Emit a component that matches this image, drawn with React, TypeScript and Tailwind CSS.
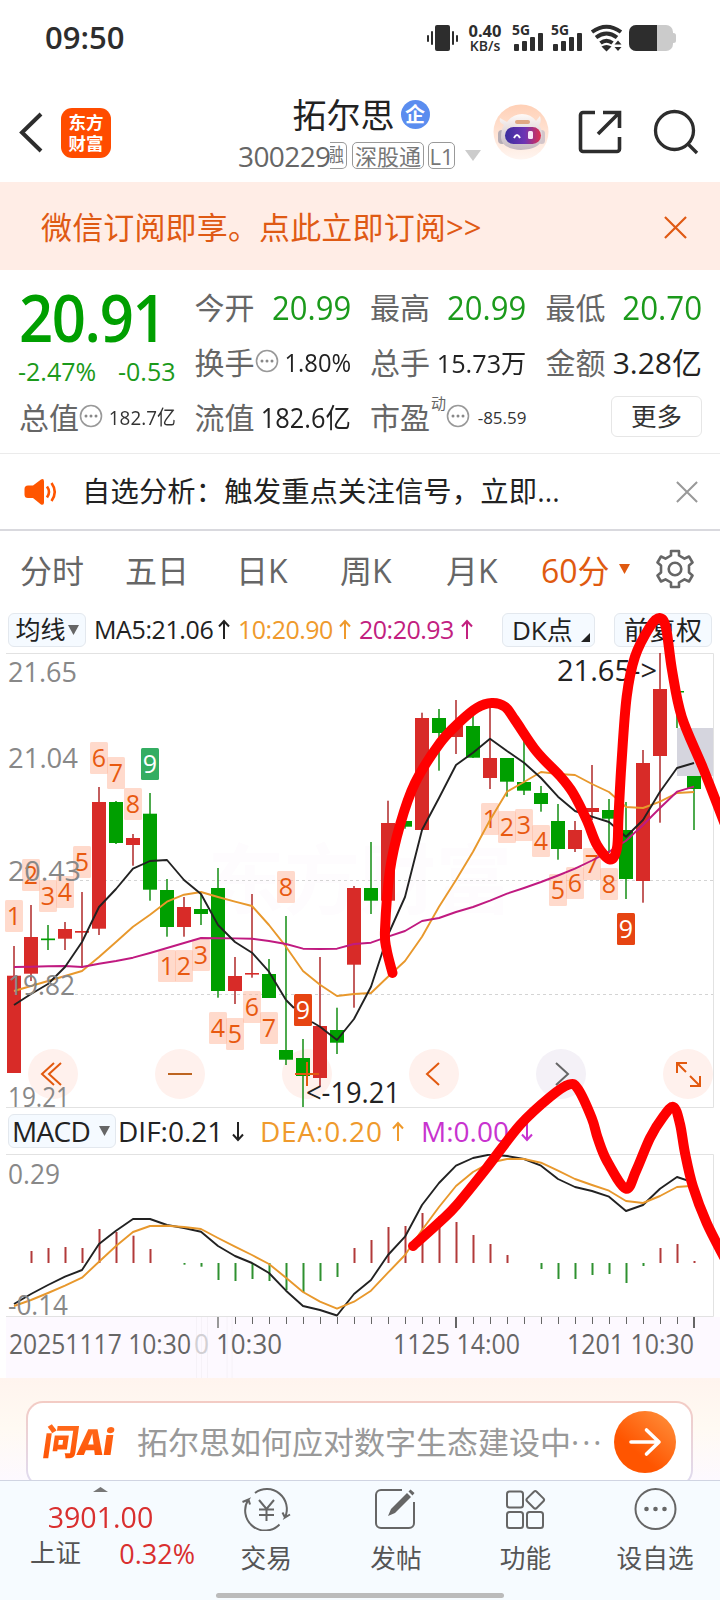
import type { ReactNode } from "react";
import clsx from "clsx";

const RED = "#d82b28";
const GREEN = "#009f00";
const STEP = 17;
const cx = (i: number) => 14 + STEP * i;

// [up, high, open/close top, open/close bottom, low]
const CANDLES: [boolean, number, number, number, number][] = [
  [true, 946, 975.7, 1073, 1073],
  [true, 905, 937, 973.7, 981],
  [false, 925, 938.5, 940.2, 950],
  [true, 922, 929, 938.7, 950],
  [true, 892, 931, 932.7, 968],
  [true, 787, 802, 928.7, 935],
  [false, 801, 802, 843, 844],
  [true, 834, 838, 845, 865.7],
  [false, 793, 813.7, 889.7, 900.7],
  [false, 879, 890, 927, 936.7],
  [true, 897, 907, 927, 936.7],
  [false, 894, 909, 914, 925],
  [false, 868, 888, 991, 997.7],
  [true, 957, 976, 991, 1004],
  [true, 894, 973, 974.6, 977.7],
  [false, 959, 974, 998, 998],
  [false, 916, 1050, 1059.7, 1065],
  [false, 1039, 1058, 1076, 1107],
  [true, 957, 1026, 1078, 1087],
  [false, 1007.7, 1030, 1042.7, 1054],
  [true, 886, 888, 964.7, 1007.7],
  [false, 842, 888, 900.7, 914],
  [true, 800.7, 823, 900.7, 901],
  [false, 818, 821, 826.7, 828.7],
  [true, 712.7, 718, 830, 830],
  [false, 709, 718, 733, 770.7],
  [true, 700, 726, 737, 754],
  [false, 716, 726, 757.7, 758],
  [true, 706, 758, 778, 789],
  [false, 758, 758, 781.7, 796.7],
  [false, 740, 782, 790.7, 795],
  [false, 786, 793, 804, 811.7],
  [false, 804, 821, 849, 859.7],
  [true, 821, 830, 849, 852],
  [true, 765, 808, 812, 820],
  [false, 799, 810, 818.7, 853],
  [false, 802, 830, 879, 899],
  [true, 750, 763, 881, 902.7],
  [true, 653, 689, 756, 822.7],
  [false, 691, 691, 692.5, 728],
  [false, 776, 776, 789, 830],
];

const MA5 = [
  1005, 994, 984, 967, 942, 907, 889, 868.7, 861, 860, 880, 894, 925, 942, 952.7, 971.7, 1000, 1017, 1026.7, 1040,
  1019, 986.7, 935, 897, 830, 798, 765, 752.7, 738.7, 751, 762.7, 778, 796.7, 811, 816.7, 822, 836.7, 820, 791.7,
  768, 763,
];
const MA10 = [
  991, 986, 981, 976, 971, 957, 942, 926.7, 914.7, 901.7, 894.7, 892, 897, 901.7, 906, 925, 946.7, 971, 984.7, 996,
  994, 993, 976.7, 961, 936.7, 906.7, 880, 851.7, 820, 791.7, 782, 772, 774, 775, 784, 792, 807, 808, 801.7, 793, 792,
];
const MA20 = [
  967, 966.7, 966.3, 966, 967, 963.7, 961, 957.7, 953, 948, 943, 938, 938.2, 938.4, 938.7, 941, 944, 948.7, 949,
  948.7, 944, 942.7, 936.7, 931, 921, 918, 912, 907, 900.7, 893.7, 888, 882, 875.5, 868.7, 860.5, 851.7, 840.7, 825,
  808, 791.7, 786.7,
];

const BAR_ENDS: (number | null)[] = [
  null, 1251, 1248, 1247, 1248, 1229, 1232, 1235.7, 1249, null, 1264.7, 1266.7, 1280, 1281, 1279, 1281, 1290, 1292,
  1281, 1277, 1248, 1240, 1227, 1226, 1213, 1216, 1222, 1235, 1244, 1255, null, 1269, 1279, 1279, 1275, 1274, 1283,
  1266, 1248, 1244, 1261,
];
const DIF = [
  1304, 1294, 1285, 1276.7, 1270, 1244, 1230.7, 1219, 1219, 1225, 1228, 1231.7, 1246, 1256, 1263, 1273, 1290.7, 1306,
  1310, 1315.5, 1294, 1280, 1255, 1236.7, 1205, 1183, 1165.7, 1158, 1154.5, 1156, 1159, 1165.7, 1179, 1187, 1191,
  1196.7, 1211, 1205, 1188.7, 1177, 1182.7,
];
const DEA = [
  1306, 1300, 1293, 1285.7, 1277.7, 1261.7, 1246, 1232, 1226, 1225.7, 1227, 1229, 1238, 1246.7, 1255, 1264, 1277.7,
  1292, 1301.7, 1308.7, 1301.7, 1290.7, 1272.7, 1255, 1230, 1207, 1186, 1172, 1162.7, 1159, 1159, 1162.7, 1170.7,
  1179, 1185, 1190.7, 1201, 1203, 1196, 1187, 1185.7,
];

// [candle index, label, top]
const COUNTS: [number, number, number][] = [
  [0, 1, 900], [1, 2, 859], [2, 3, 880], [3, 4, 876], [4, 5, 846], [5, 6, 742], [6, 7, 757], [7, 8, 788], [8, 9, 748],
  [9, 1, 950], [10, 2, 950], [11, 3, 939], [12, 4, 1012], [13, 5, 1018], [14, 6, 991], [15, 7, 1012], [16, 8, 871],
  [17, 9, 994],
  [28, 1, 803], [29, 2, 811], [30, 3, 809], [31, 4, 825], [32, 5, 874], [33, 6, 867], [34, 7, 848], [35, 8, 868],
  [36, 9, 913],
];

const STROKE_A: [number, number][] = [
  [392.5, 973], [386.7, 950], [385, 930], [390, 870], [400, 825], [415, 783], [440, 743], [460, 721.7], [476.7, 708],
  [491.7, 703], [505, 706.7], [515, 720], [536.7, 751.7], [560, 776], [573, 793], [586.7, 820], [597, 845], [610, 859.5],
  [617, 848], [618.5, 816.7], [621.5, 763], [626.7, 696.7], [635, 656.7], [650, 626.7], [659.5, 618], [666, 628],
  [672, 670], [681.7, 716.7], [703, 768], [724, 822],
];
const STROKE_B: [number, number][] = [
  [413, 1246], [440, 1221.7], [456.7, 1205], [486.7, 1168], [520, 1125], [550, 1097], [569, 1084.5], [578, 1089],
  [591.7, 1118], [597.7, 1138], [607, 1161], [625.7, 1188.5], [636, 1171], [650, 1138], [663, 1117], [673.5, 1107],
  [680, 1124], [685, 1153], [693, 1186.7], [706.7, 1223], [724, 1257],
];

const line = (ys: number[]) => ys.map((y, i) => `${cx(i)},${y}`).join(" ");

function smooth(p: [number, number][]) {
  let d = `M${p[0][0]} ${p[0][1]}`;
  for (let i = 0; i < p.length - 1; i++) {
    const a = p[i - 1] ?? p[i];
    const b = p[i];
    const c = p[i + 1];
    const e = p[i + 2] ?? c;
    d += ` C${b[0] + (c[0] - a[0]) / 6} ${b[1] + (c[1] - a[1]) / 6} ${c[0] - (e[0] - b[0]) / 6} ${c[1] - (e[1] - b[1]) / 6} ${c[0]} ${c[1]}`;
  }
  return d;
}

function Label({ x, y, w, size = 28, fill = "#888", children }: { x: number; y: number; w: number; size?: number; fill?: string; children: string }) {
  return (
    <text x={x} y={y} fontSize={size} fill={fill} textLength={w} lengthAdjust="spacingAndGlyphs">
      {children}
    </text>
  );
}

function StatusBar() {
  return (
    <div className="flex h-[80px] items-center justify-between pb-[5px] pl-[45px] pr-[44px] text-[#2d2d2d]">
      <span className="text-[31px] font-semibold leading-none">09:50</span>
      <div className="flex items-center">
        <svg width="32" height="28" viewBox="0 0 32 28" fill="#2d2d2d">
          <rect x="8" y="1" width="15" height="26" rx="2" />
          <rect x="4" y="7" width="2" height="14" rx="1" />
          <rect x="0" y="11" width="2" height="7" rx="1" />
          <rect x="25" y="7" width="2" height="14" rx="1" />
          <rect x="29" y="11" width="2" height="7" rx="1" />
        </svg>
        <div className="ml-[7px] mr-[2px] flex w-[38px] flex-col items-center font-bold leading-none">
          <span className="text-[16.500px] leading-[16px]">0.40</span>
          <span className="text-[14px] font-semibold leading-[14px]">KB/s</span>
        </div>
        {[0, 1].map((k) => (
          <svg key={k} className="ml-[6px]" width="33" height="30" viewBox="0 0 33 30" fill="#2d2d2d">
            <text x="0" y="12" fontSize="14" fontWeight="700" textLength="18" lengthAdjust="spacingAndGlyphs">5G</text>
            <rect x="2" y="21" width="5" height="7" rx="1" />
            <rect x="10" y="18" width="5" height="10" rx="1" />
            <rect x="18" y="14" width="5" height="14" rx="1" />
            <rect x="26" y="10" width="5" height="18" rx="1" />
          </svg>
        ))}
        <svg className="ml-[6px]" width="34" height="30" viewBox="0 0 34 30" fill="none" stroke="#2d2d2d" strokeWidth="4">
          <path d="M2 9q14.500-10.500 29 0" />
          <path d="M6 14.500q10.500-8 21 0" />
          <path d="M10.500 20q6-4.500 12 0" />
          <path d="M11.500 23.500q5-3 10 0l-5 5z" fill="#2d2d2d" stroke="none" />
          <path d="M24.500 21.500l3.500-4 3.500 4zM24.500 24l3.500 4 3.500-4z" fill="#2d2d2d" stroke="none" />
        </svg>
        <svg className="ml-[4px]" width="48" height="28" viewBox="0 0 48 28">
          <rect x="1" y="1" width="44" height="26" rx="7" fill="#cbcbcb" />
          <rect x="43" y="9" width="5" height="10" rx="2.500" fill="#cbcbcb" />
          <path d="M8 1h21v26H8a7 7 0 0 1-7-7V8a7 7 0 0 1 7-7z" fill="#2d2d2d" />
        </svg>
      </div>
    </div>
  );
}

function Robot() {
  return (
    <svg width="56" height="56" viewBox="0 0 56 56">
      <defs>
        <linearGradient id="halo" x2="0" y2="1">
          <stop offset="0" stopColor="#ffd0b6" />
          <stop offset="1" stopColor="#fff5f0" />
        </linearGradient>
        <linearGradient id="visor">
          <stop offset="0" stopColor="#3b2f9e" />
          <stop offset=".55" stopColor="#6d34b4" />
          <stop offset="1" stopColor="#e0304e" />
        </linearGradient>
        <linearGradient id="shell" x2="0" y2="1">
          <stop offset="0" stopColor="#fffaf7" />
          <stop offset="1" stopColor="#c4b8c0" />
        </linearGradient>
      </defs>
      <circle cx="28" cy="28" r="27.500" fill="url(#halo)" />
      <rect x="5" y="26" width="8" height="14" rx="4" fill="#b5adb5" />
      <rect x="45" y="26" width="7" height="14" rx="3.500" fill="#d3c5ca" />
      <path d="M8 19q-2-2-1-5l7 4q6-8 15-8t14 7l4-5q2 6-1 9 4 6 3 14-2 10-21 11-19-1-20-12 0-9 3-13z" fill="url(#shell)" />
      <rect x="22" y="16" width="15" height="4" rx="2" fill="#e0a883" />
      <rect x="12" y="23" width="36" height="17" rx="8.500" fill="url(#visor)" />
      <path d="M21 34q3-6 6 0" fill="none" stroke="#fff" strokeWidth="2" />
      <rect x="35" y="27" width="5" height="8" rx="1.500" fill="#f7e8f8" />
    </svg>
  );
}

function Header() {
  return (
    <header className="flex h-[102px] items-center pl-[18px] pt-[2px]">
      <svg width="26" height="42" viewBox="0 0 26 42" fill="none" stroke="#2d2d2d" strokeWidth="4">
        <path d="M23 3L4 21.500 23 40" />
      </svg>
      <div className="ml-[17px] mt-px grid h-[50px] w-[50px] place-content-center rounded-[11px] bg-[#ff4c00] text-center text-[17.500px] font-bold leading-[20.500px] text-white">
        <span>东方</span>
        <span>财富</span>
      </div>
      <div className="ml-[127px] flex w-[246px] flex-col items-center">
        <div className="-mt-[2px] flex items-center">
          <span className="text-[34px] leading-[44px] text-[#222]">拓尔思</span>
          <span className="ml-[6px] grid h-[29px] w-[29px] place-content-center rounded-full bg-[#5b8def] text-[20px] font-bold leading-none text-white">企</span>
        </div>
        <div className="mt-[5px] flex h-[28px] items-center self-start text-[22px] leading-none text-[#777]">
          <span className="w-[92px] whitespace-nowrap text-[28px] tracking-[-0.600px] text-[#666]">300229</span>
          <span className="flex h-[27px] w-[17px] items-center justify-end overflow-hidden rounded-r-[5px] border border-l-0 border-[#999] pr-[2px] text-[19px]">融</span>
          <span className="ml-[5px] flex h-[27px] items-center rounded-[5px] border border-[#999] px-[2px]">深股通</span>
          <span className="ml-[4px] flex h-[27px] w-[27px] items-center justify-center rounded-[5px] border border-[#999] text-[22px]">L1</span>
          <svg className="ml-[10px]" width="16" height="11" viewBox="0 0 16 11" fill="#ccc">
            <path d="M0 0h16L8 11z" />
          </svg>
        </div>
      </div>
      <div className="ml-[9px] flex items-center">
        <Robot />
        <svg className="ml-[29px]" width="44" height="44" viewBox="0 0 44 44" fill="none" stroke="#2d2d2d" strokeWidth="3.600">
          <path d="M17 2.500H5a2.500 2.500 0 0 0-2.500 2.500v34A2.500 2.500 0 0 0 5 41.500h34a2.500 2.500 0 0 0 2.500-2.500V27M25 2.500h16.500V18M40 4L20 24" />
        </svg>
        <svg className="ml-[31px]" width="46" height="46" viewBox="0 0 46 46" fill="none" stroke="#2d2d2d" strokeWidth="3.300">
          <circle cx="21.500" cy="21.500" r="19" />
          <path d="M35 35l9 9" />
        </svg>
      </div>
    </header>
  );
}

function Cross({ size, color, width }: { size: number; color: string; width: number }) {
  return (
    <svg width={size} height={size} viewBox="0 0 24 24" fill="none" stroke={color} strokeWidth={width}>
      <path d="M1 1l22 22M23 1L1 23" />
    </svg>
  );
}

function Dots() {
  return (
    <svg className="-mt-[4px] shrink-0" width="24" height="24" viewBox="0 0 24 24">
      <circle cx="12" cy="12" r="10.500" fill="none" stroke="#999" strokeWidth="1.600" />
      <circle cx="7" cy="12" r="1.500" fill="#888" />
      <circle cx="12" cy="12" r="1.500" fill="#888" />
      <circle cx="17" cy="12" r="1.500" fill="#888" />
    </svg>
  );
}

function Cell({ label, extra, children, className }: { label: string; extra?: ReactNode; children: ReactNode; className: string }) {
  return (
    <div className="flex h-[55px] items-center justify-between whitespace-nowrap leading-none">
      <span className="flex items-center">
        <span className="text-[30px] text-[#666]">{label}</span>
        {extra}
      </span>
      <span className={clsx("origin-right", className)}>{children}</span>
    </div>
  );
}

function Quote() {
  return (
    <section className="grid h-[184px] grid-cols-4 gap-x-[19px] border-b border-[#ebebeb] pl-[19px] pr-[18px] pt-[10px]">
      <div>
        <div className="h-[70px] origin-left scale-x-[.92] pt-[5px] text-[65px] font-semibold leading-none tracking-[-1.500px] text-[#009f00]">20.91</div>
        <div className="-ml-px flex h-[40px] items-center justify-between pt-[2px] text-[25px] leading-none text-[#1b9a1b]">
          <span>-2.47%</span>
          <span>-0.53</span>
        </div>
        <Cell label="总值" extra={<Dots />} className="scale-x-[.92] text-[20.500px] text-[#333]">182.7亿</Cell>
      </div>
      <div>
        <Cell label="今开" className="scale-x-[.94] text-[33px] text-[#1b9a1b]">20.99</Cell>
        <Cell label="换手" extra={<Dots />} className="scale-x-[.95] text-[25px] text-[#222]">1.80%</Cell>
        <Cell label="流值" className="scale-x-[.94] text-[27px] text-[#222]">182.6亿</Cell>
      </div>
      <div>
        <Cell label="最高" className="scale-x-[.94] text-[33px] text-[#1b9a1b]">20.99</Cell>
        <Cell label="总手" className="scale-x-[.97] text-[26px] text-[#222]">15.73万</Cell>
        <Cell
          label="市盈"
          extra={
            <>
              <span className="-mt-[28px] ml-[1px] text-[15px] text-[#666]">动</span>
              <Dots />
            </>
          }
          className="text-[17px] text-[#333]"
        >
          -85.59
        </Cell>
      </div>
      <div>
        <Cell label="最低" className="scale-x-[.95] text-[33px] text-[#1b9a1b]">20.70</Cell>
        <Cell label="金额" className="text-[30px] text-[#222]">3.28亿</Cell>
        <div className="ml-auto mt-[6px] grid h-[41px] w-[91px] place-content-center rounded-[6px] border border-[#e6e6e6] text-[25.500px] leading-none text-[#333]">更多</div>
      </div>
    </section>
  );
}

function Notice() {
  return (
    <div className="flex h-[77px] items-center border-b-2 border-[#d9d9de] pl-[24px] pr-[22px]">
      <svg width="33" height="28" viewBox="0 0 33 28">
        <path d="M4 7.500h5L17 1.500q3-1.500 3 2v21q0 3-3 2l-8-6.500H4q-3.500 0-3.500-3.500v-5.500q0-3.500 3.500-3.500z" fill="#ff5500" />
        <path d="M23 8.500q4 5.500 0 11M27.500 5q6.500 9 0 18" fill="none" stroke="#ff5500" strokeWidth="2.600" />
      </svg>
      <span className="ml-[25px] flex-1 whitespace-nowrap text-[28.300px] leading-none tracking-[0.150px] text-[#222]">自选分析：触发重点关注信号，立即...</span>
      <Cross size={22} color="#999" width={2.2} />
    </div>
  );
}

const TABS = [
  { name: "分时", box: "w-[105px]" },
  { name: "五日", box: "w-[111px]" },
  { name: "日K", box: "w-[104px]" },
  { name: "周K", box: "w-[106px]" },
  { name: "月K", box: "w-[95px]" },
];

function Tabs() {
  return (
    <nav className="flex h-[75px] items-center whitespace-nowrap pl-[20px] pt-[4px] text-[32px] leading-none text-[#666]">
      {TABS.map((t) => (
        <span key={t.name} className={t.box}>{t.name}</span>
      ))}
      <span className="w-[78px] text-[#e05a10]">60分</span>
      <svg width="11" height="10" viewBox="0 0 11 10" fill="#e05a10" className="-mt-[4px]">
        <path d="M0 0h11L5.500 10z" />
      </svg>
      <svg className="-mt-[4px] ml-[26px]" width="38" height="40" viewBox="0 0 38 40" fill="none" stroke="#666" strokeWidth="2.600" strokeLinejoin="round">
        <path d="M15 2h8v4.500l5.500 3.200 4.500-2.200 3.500 6-3.500 3v7l3.500 3-3.500 6-4.500-2.200L23 33.500V38h-8v-4.500l-5.500-3.200L5 32.500l-3.500-6 3.500-3v-7l-3.500-3 3.500-6 4.500 2.200L15 6.500z" />
        <circle cx="19" cy="20" r="6.300" />
      </svg>
    </nav>
  );
}

function Arrow({ up, color, className }: { up?: boolean; color: string; className?: string }) {
  return (
    <svg className={clsx("shrink-0", className)} width="12" height="21" viewBox="0 0 12 21" fill="none" stroke={color} strokeWidth="2">
      <path d={up ? "M6 20V2M1 7.500L6 2l5 5.500" : "M6 1v18M1 13.500L6 19l5-5.500"} />
    </svg>
  );
}

const chip = "flex shrink-0 items-center rounded-[6px] border border-[#e3e8ee] bg-[#f5faff] text-[#222]";

function MaRow() {
  return (
    <div className="flex h-[47px] items-center whitespace-nowrap pl-[8px] text-[25px] leading-none">
      <div className={clsx(chip, "h-[34px] w-[78px] justify-center")}>
        <span>均线</span>
        <svg className="ml-[2px]" width="11" height="10" viewBox="0 0 11 10" fill="#666"><path d="M0 0h11L5.500 10z" /></svg>
      </div>
      <span className="ml-[8px] w-[124px] shrink-0 tracking-[-0.400px] text-[#222]">MA5:21.06</span>
      <Arrow up color="#222" />
      <span className="ml-[8px] w-[101px] shrink-0 tracking-[-0.500px] text-[#ef9a2c]">10:20.90</span>
      <Arrow up color="#ef9a2c" />
      <span className="ml-[8px] w-[102px] shrink-0 tracking-[-0.500px] text-[#c2207f]">20:20.93</span>
      <Arrow up color="#c2207f" />
      <div className={clsx(chip, "ml-[29px] h-[34px] w-[93px] justify-between pl-[9px] pr-[4px] text-[26px]")}>
        <span>DK点</span>
        <svg className="mt-[15px]" width="9" height="9" viewBox="0 0 9 9" fill="#222"><path d="M9 0v9H0z" /></svg>
      </div>
      <div className={clsx(chip, "ml-[19px] h-[34px] w-[98px] justify-center text-[26px]")}>前复权</div>
    </div>
  );
}

const BUTTONS = [
  { x: 53, icon: <path d="M54 1063l-12 11 12 11M61 1063l-12 11 12 11" /> },
  { x: 180, icon: <path d="M168 1074h24" stroke="#bd6420" /> },
  { x: 307, icon: <path d="M295 1074h24M307 1062v24" /> },
  { x: 434, icon: <path d="M439 1063l-12 11 12 11" /> },
  { x: 561, icon: <path d="M556 1063l12 11-12 11" stroke="#666" />, gray: true },
  { x: 688, icon: <path d="M677 1073v-10h10M677 1063l9 9M700 1076v10h-10M700 1086l-10-10" /> },
];

function KChart() {
  return (
    <svg className="block" width="720" height="455" viewBox="0 653 720 455">
      {["东", "方", "财", "富"].map((c, k) => (
        <text key={c} x={208 + k * 76} y="908" fontSize="76" fontWeight="700" fill="#fefcfe">{c}</text>
      ))}
      <path d="M6 653.500H713.500V1107.500H6" fill="none" stroke="#e2e2e2" />
      <path d="M80 880.500H713M75 994.500H713" stroke="#d4d4d4" strokeDasharray="3 3" />
      <rect x="677" y="728" width="36" height="48" fill="#d5d5de" />
      {BUTTONS.map((b) => (
        <circle key={b.x} cx={b.x} cy="1074" r="25" fill={b.gray ? "#f4f1f7" : "#fff1ed"} />
      ))}
      {CANDLES.map(([up, hi, top, bottom, lo], i) => (
        <g key={i} fill={up ? RED : GREEN}>
          <rect x={cx(i) - 0.75} y={hi} width="1.500" height={lo - hi} fill={up ? "#b02a2a" : "#148f14"} />
          <rect x={i === 39 ? cx(i) : cx(i) - 7} y={top} width={i === 39 ? 7 : 14} height={bottom - top} />
        </g>
      ))}
      {COUNTS.map(([i, n, y]) => (
        <g key={`${i}-${n}`}>
          <rect
            x={cx(i) - 9}
            y={y}
            width="18"
            height="32"
            rx="1.500"
            fill={n < 9 ? "#ffb59a" : i === 8 ? "#34ad62" : "#e64412"}
            fillOpacity={n < 9 ? 0.5 : 1}
          />
          <text x={cx(i)} y={y + 25} fontSize="25" textAnchor="middle" fill={n < 9 ? "#e8590f" : "#fff"}>{n}</text>
        </g>
      ))}
      <g fill="none" strokeWidth="1.900" strokeLinejoin="round">
        <polyline points={line(MA10)} stroke="#e8982c" />
        <polyline points={line(MA20)} stroke="#c01a80" />
        <polyline points={line(MA5.slice(0, 17))} stroke="#222" />
        <polyline points="286,1000 294,1008" stroke="#222" />
        <polyline points={`312,1022 320,1026.700 ${line(MA5).split(" ").slice(19).join(" ")}`} stroke="#222" />
      </g>
      <Label x={8} y={682} w={69}>21.65</Label>
      <Label x={8} y={768} w={70}>21.04</Label>
      <Label x={8} y={881} w={73}>20.43</Label>
      <Label x={8} y={995} w={67}>19.82</Label>
      <Label x={8} y={1107} w={62}>19.21</Label>
      <Label x={557} y={681} w={100} size={29} fill="#222">{"21.65->"}</Label>
      <Label x={306} y={1102.5} w={94} size={29} fill="#222">{"<-19.21"}</Label>
      {BUTTONS.map((b) => (
        <g key={b.x} fill="none" stroke="#e2590f" strokeWidth="2">{b.icon}</g>
      ))}
    </svg>
  );
}

function MacdRow() {
  return (
    <div className="flex h-[46px] items-center whitespace-nowrap pl-[8px] text-[28px] leading-none">
      <div className={clsx(chip, "h-[34px] w-[108px] justify-between pl-[3px] pr-[5px]")}>
        <span className="w-[80px] tracking-[-0.700px]">MACD</span>
        <svg width="11" height="10" viewBox="0 0 11 10" fill="#666"><path d="M0 0h11L5.500 10z" /></svg>
      </div>
      <span className="ml-[2px] w-[114px] shrink-0 text-[#222]">DIF:0.21</span>
      <Arrow color="#222" />
      <span className="ml-[16px] w-[132px] shrink-0 tracking-[0.800px] text-[#ef9a2c]">DEA:0.20</span>
      <Arrow up color="#ef9a2c" />
      <span className="ml-[17px] w-[100px] shrink-0 text-[#c833cf]">M:0.00</span>
      <Arrow color="#c833cf" />
    </div>
  );
}

function MacdChart() {
  return (
    <svg className="block" width="720" height="224" viewBox="0 1154 720 224">
      <rect x="6" y="1317" width="714" height="61" fill="#fdf9ff" />
      <path d="M6 1154.500H713.500V1316.500H6" fill="none" stroke="#e2e2e2" />
      {BAR_ENDS.map((y, i) =>
        y === null ? null : (
          <rect key={i} x={cx(i) - 0.5} y={Math.min(y, 1263)} width="2" height={Math.abs(y - 1263)} fill={y > 1263 ? "#2f9130" : "#b23a3a"} />
        ),
      )}
      <g fill="none" strokeWidth="1.900" strokeLinejoin="round">
        <polyline points={line(DIF)} stroke="#222" />
        <polyline points={line(DEA)} stroke="#e8982c" />
      </g>
      <Label x={8} y={1184} w={52} size={27}>0.29</Label>
      <Label x={8} y={1315} w={60} size={27}>-0.14</Label>
      {Array.from({ length: 30 }, (_, k) => k + 11).map((i) => {
        const big = i === 12 || i === 26 || i === 40;
        return (
          <rect key={i} x={big ? cx(i) - 1 : cx(i)} y="1317" width={big ? 2 : 1} height={big ? 11 : 7} fill={i === 11 ? "#ddd" : i === 12 ? "#999" : "#666"} />
        );
      })}
      <path d="M196.500 1317v61M201.500 1317v61M207.500 1317v61M227 1317v61M232 1317v61" stroke="#f6f2f8" />
      <Label x={9} y={1354} w={182} size={27.5} fill="#666">20251117 10:30</Label>
      <Label x={194} y={1354} w={15} size={27.5} fill="#d2d0d4">0</Label>
      <Label x={216} y={1354} w={66} size={27.5} fill="#666">10:30</Label>
      <Label x={393} y={1354} w={127} size={27.5} fill="#666">1125 14:00</Label>
      <Label x={567} y={1354} w={127} size={27.5} fill="#666">1201 10:30</Label>
    </svg>
  );
}

function AskBar() {
  return (
    <div className="h-[102px] overflow-hidden bg-gradient-to-b from-[#fff4ee] via-[#fffaf3] to-[#fdf9ff] pl-[26px] pr-[27px] pt-[23px]">
      <div className="h-[86px] rounded-[17px] bg-gradient-to-b from-[#f3cbc4] to-[#dedcf2] p-[2px]">
        <div className="flex h-full items-center rounded-[15px] bg-white pb-[4px] pl-[15px] pr-[15px]">
          <span className="w-[76px] -skew-x-[8deg] bg-gradient-to-b from-[#ff6a1c] to-[#ff5200] bg-clip-text text-[36px] font-extrabold leading-[40px] tracking-[-1px] text-transparent">
            问Ai
          </span>
          <span className="ml-[18px] w-[466px] whitespace-nowrap text-[31px] leading-none text-[#999]">拓尔思如何应对数字生态建设中<span className="tracking-[3px]">···</span></span>
          <svg className="ml-auto" width="62" height="62" viewBox="0 0 62 62">
            <defs>
              <linearGradient id="go" x1="1" x2="0.400" y1="0" y2="0.700">
                <stop offset="0" stopColor="#ff9440" />
                <stop offset="1" stopColor="#ff5500" />
              </linearGradient>
            </defs>
            <circle cx="31" cy="31" r="31" fill="url(#go)" />
            <path d="M17 31h28M32.500 19L45 31 32.500 43" fill="none" stroke="#fff" strokeWidth="3.600" strokeLinecap="round" strokeLinejoin="round" />
          </svg>
        </div>
      </div>
    </div>
  );
}

const NAV = [
  {
    name: "交易",
    icon: (
      <>
        <path d="M13 6A20 20 0 0 1 43 30.500l5-3M43 30.500l-2.500-5" />
        <path d="M37.500 37.500A20 20 0 0 1 6.500 12.500L.5 15M6.500 12.500l1.500 5" />
        <path d="M17 13l7.500 9L32 13M24.500 22v12M17 22.500h15M17 28h15" />
      </>
    ),
  },
  {
    name: "发帖",
    icon: (
      <>
        <path d="M31 3H10a5 5 0 0 0-5 5v28a5 5 0 0 0 5 5h28a5 5 0 0 0 5-5V15" />
        <path d="M17 29l3-7L36 6l4 4-16 16zM37.500 4.500l2-2 4 3.500-2 2.500z" fill="#666" stroke="none" />
      </>
    ),
  },
  {
    name: "功能",
    icon: (
      <>
        <rect x="6" y="4.500" width="16" height="16" rx="2.500" />
        <rect x="6" y="25" width="16" height="16" rx="2.500" />
        <rect x="26" y="25" width="16" height="16" rx="2.500" />
        <rect x="27.500" y="6" width="13.500" height="13.500" rx="2" transform="rotate(45 34.200 12.800)" />
      </>
    ),
  },
  {
    name: "设自选",
    icon: (
      <>
        <circle cx="24.500" cy="22" r="20" />
        <g fill="#666" stroke="none">
          <circle cx="15.500" cy="22" r="2.300" />
          <circle cx="24.500" cy="22" r="2.300" />
          <circle cx="33.500" cy="22" r="2.300" />
        </g>
      </>
    ),
  },
];

function BottomNav() {
  return (
    <footer className="h-[120px] border-t border-[#d0d4e2] bg-[#f6fbff]">
      <div className="flex h-[112px]">
        <div className="flex w-[201px] flex-col items-center pt-[6px] leading-none text-[#d92f2f]">
          <svg width="15" height="5" viewBox="0 0 15 5" fill="#777"><path d="M0 5L7.500 0 15 5z" /></svg>
          <span className="mt-[10px] scale-x-[.97] text-[29.500px]">3901.00</span>
          <div className="ml-[30px] mt-[8px] flex w-[165px] items-center justify-between self-start">
            <span className="text-[25.500px] text-[#555]">上证</span>
            <span className="text-[27px]">0.32%</span>
          </div>
        </div>
        {NAV.map((n) => (
          <div key={n.name} className="flex w-[129.600px] flex-col items-center pl-px pt-[6px]">
            <svg width="49" height="44" viewBox="0 0 49 44" fill="none" stroke="#666" strokeWidth="2">{n.icon}</svg>
            <span className="mt-[15px] text-[25.700px] leading-[26px] text-[#555]">{n.name}</span>
          </div>
        ))}
      </div>
      <div className="mx-auto h-[5px] w-[288px] rounded-full bg-[#bbb]" />
    </footer>
  );
}

export default function App() {
  return (
    <div className="relative h-[1600px] w-[720px] overflow-hidden bg-white font-['Open_Sans','Noto_Sans_CJK_SC',sans-serif]">
      <StatusBar />
      <Header />
      <div className="flex h-[88px] items-center justify-between bg-[#ffede6] pl-[41px] pr-[33px] pt-[2px]">
        <span className="text-[31px] leading-none tracking-[0.150px] text-[#df5a14]">微信订阅即享。点此立即订阅&gt;&gt;</span>
        <Cross size={23} color="#e05a14" width={2.3} />
      </div>
      <Quote />
      <Notice />
      <Tabs />
      <MaRow />
      <KChart />
      <MacdRow />
      <MacdChart />
      <AskBar />
      <BottomNav />

      {/* hand-drawn marks */}
      <svg className="pointer-events-none absolute inset-0" width="720" height="1600" viewBox="0 0 720 1600" fill="none" stroke="#ff0000" strokeWidth="10" strokeLinecap="round" strokeLinejoin="round">
        <path d={smooth(STROKE_A)} />
        <path d={smooth(STROKE_B)} />
      </svg>
    </div>
  );
}
